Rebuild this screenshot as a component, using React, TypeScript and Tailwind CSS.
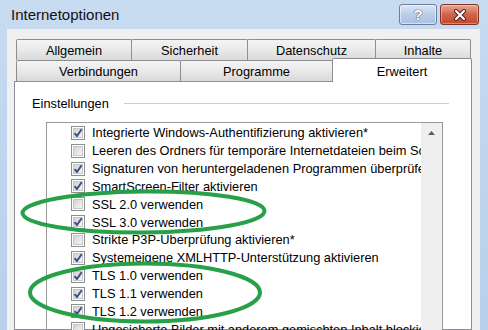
import React from 'react';

const settings = [
  { label: 'Integrierte Windows-Authentifizierung aktivieren*', checked: true },
  { label: 'Leeren des Ordners für temporäre Internetdateien beim Schließen des Browsers', checked: false },
  { label: 'Signaturen von heruntergeladenen Programmen überprüfen', checked: true },
  { label: 'SmartScreen-Filter aktivieren', checked: true },
  { label: 'SSL 2.0 verwenden', checked: false },
  { label: 'SSL 3.0 verwenden', checked: true },
  { label: 'Strikte P3P-Überprüfung aktivieren*', checked: false },
  { label: 'Systemeigene XMLHTTP-Unterstützung aktivieren', checked: true },
  { label: 'TLS 1.0 verwenden', checked: true },
  { label: 'TLS 1.1 verwenden', checked: true },
  { label: 'TLS 1.2 verwenden', checked: true },
  { label: 'Ungesicherte Bilder mit anderem gemischten Inhalt blockieren', checked: false },
];

const Checkbox: React.FC<{ checked: boolean }> = ({ checked }) => (
  <div className="relative h-[14px] w-[14px] shrink-0 border border-[#8e8f8f] bg-white p-px">
    <div className="h-full w-full border border-[#c6c6c6] bg-linear-to-br from-[#d2d2d2] to-[#f7f7f7]" />
    {checked && (
      <svg className="absolute left-0 top-0" width="12" height="12" viewBox="0 0 12 12">
        <path d="M2.6 6.2 L5 9 L9.6 2.2" fill="none" stroke="#3b4f8e" strokeWidth="2" strokeLinejoin="round" />
      </svg>
    )}
  </div>
);

const Tab: React.FC<{ label: string; width: string; first?: boolean }> = ({ label, width, first }) => (
  <div
    className={`${width} ${first ? '' : '-ml-px'} flex h-full items-center justify-center rounded-t-[2px] border-x border-t border-[#8c8e94] bg-linear-to-b from-[#f4f4f4] via-[#e9e9e9] to-[#d9d9d9] pt-px text-[12.8px]`}
  >
    {label}
  </div>
);

export default function App() {
  return (
    <div className="relative h-[330px] w-[488px] overflow-hidden bg-linear-to-b from-[#c7dbf1] to-[#b8d0ea] font-['Liberation_Sans',Arial,sans-serif] text-black">
      {/* title bar */}
      <div className="flex h-[29px] items-start justify-between">
        <div className="pl-[11px] pt-[6px] text-[15px] leading-[18px] text-[#111]">Internetoptionen</div>
        <div className="flex gap-[3px] pr-[9px] pt-[4px]">
          <div className="flex h-[21px] w-[38px] items-center justify-center rounded-[3px] border border-[#6a7f9f] bg-linear-to-b from-[#dbe7f5] via-[#b9cde8] to-[#a9c1e2] shadow-[inset_0_0_0_1px_rgba(255,255,255,0.5)]">
            <span className="text-[15px] font-bold leading-none text-white [text-shadow:0_0_1px_#2b3a55,0_0_1px_#2b3a55]">?</span>
          </div>
          <div className="flex h-[21px] w-[39px] items-center justify-center rounded-[3px] border border-[#7d3326] bg-linear-to-b from-[#e9a794] via-[#d0644b] to-[#c2462a] shadow-[inset_0_0_0_1px_rgba(255,255,255,0.35)]">
            <svg width="14" height="12" viewBox="0 0 14 12">
              <path d="M3 2 L11 10 M11 2 L3 10" stroke="#4a1c14" strokeWidth="4" strokeLinecap="round" />
              <path d="M3 2 L11 10 M11 2 L3 10" stroke="#ffffff" strokeWidth="2.2" strokeLinecap="round" />
            </svg>
          </div>
        </div>
      </div>

      {/* client area */}
      <div className="ml-[7px] h-[301px] w-[473px] bg-[#f0f0f0] px-[7px] pt-[10px]">
        <div className="ml-[2px] flex h-[21px]">
          <Tab label="Allgemein" width="w-[116px]" first />
          <Tab label="Sicherheit" width="w-[117px]" />
          <Tab label="Datenschutz" width="w-[129px]" />
          <Tab label="Inhalte" width="w-[96px]" />
        </div>
        <div className="ml-[2px] flex h-[21px]">
          <Tab label="Verbindungen" width="w-[165px]" first />
          <Tab label="Programme" width="w-[153px]" />
          <div className="relative z-10 -ml-px -mt-[2px] flex h-[24px] w-[140px] items-start justify-center rounded-t-[2px] border-x border-t border-[#8c8e94] bg-white pt-[3px] text-[12.8px]">
            Erweitert
          </div>
        </div>

        {/* panel */}
        <div className="h-[249px] w-[458px] border border-[#8c8e94] bg-white">
          <div className="mt-[14px] flex h-[15px] items-center pl-[17px] pr-[22px]">
            <span className="text-[12.8px] leading-[15px]">Einstellungen</span>
            <div className="ml-[15px] h-px flex-1 bg-[#cfcfcf]" />
          </div>

          <div className="ml-[31px] mt-[11px] flex h-[220px] w-[397px] border border-[#9a9a9a]">
            <div className="min-w-0 flex-1 overflow-hidden pt-px">
              {settings.map((s) => (
                <div key={s.label} className="flex h-[17.85px] items-center gap-[7px] whitespace-nowrap pl-[24px] text-[12.8px]">
                  <Checkbox checked={s.checked} />
                  <span>{s.label}</span>
                </div>
              ))}
            </div>
            <div className="flex w-[21px] shrink-0 justify-center bg-[#efefef] pt-[8px]">
              <svg width="7" height="4" viewBox="0 0 7 4">
                <path d="M0 4 L3.5 0 L7 4 Z" fill="#5e5e5e" />
              </svg>
            </div>
          </div>
        </div>
      </div>

      {/* hand-drawn highlight marks */}
      <svg className="pointer-events-none absolute left-0 top-0" width="488" height="330" viewBox="0 0 488 330">
        <ellipse cx="143.5" cy="212" rx="121" ry="20.5" fill="none" stroke="#28a048" strokeWidth="4" transform="rotate(-0.5 143.5 212)" />
        <ellipse cx="145" cy="292.5" rx="115" ry="29" fill="none" stroke="#28a048" strokeWidth="4" />
      </svg>
    </div>
  );
}
